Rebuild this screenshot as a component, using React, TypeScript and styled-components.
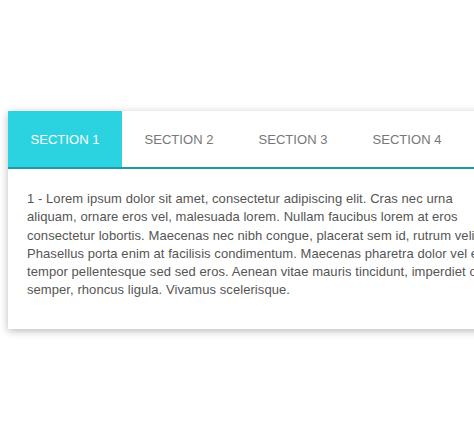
import React, { useState } from "react";
import styled, { createGlobalStyle } from "styled-components";

const GlobalStyle = createGlobalStyle`
  html, body {
    margin: 0;
    padding: 0;
    background: #fff;
    overflow: hidden;
  }
  body {
    font-family: "Liberation Sans", Arial, sans-serif;
  }
`;

const Page = styled.div`
  width: 474px;
  height: 447px;
  padding: 111px 0 0 8px;
  box-sizing: border-box;
`;

const Card = styled.div`
  width: 510px;
  background: #fff;
  box-shadow: 0 2px 8px rgba(0, 0, 0, 0.28);
`;

const TabBar = styled.div`
  display: flex;
  border-bottom: 2px solid #1c9aa6;
`;

const Tab = styled.button<{ $active: boolean }>`
  width: 114px;
  height: 56px;
  border: none;
  margin: 0;
  padding: 0;
  background: ${(p) => (p.$active ? "#2bd3e0" : "#fff")};
  color: ${(p) => (p.$active ? "#fff" : "#777")};
  font-family: "Liberation Sans", Arial, sans-serif;
  font-size: 13px;
  letter-spacing: 0.05px;
  text-transform: uppercase;
  cursor: pointer;
`;

const Content = styled.p`
  margin: 0;
  padding: 21px 19px 29px 19px;
  color: #555;
  font-size: 13px;
  letter-spacing: 0.07px;
  line-height: 18.3px;
`;

const sections = ["Section 1", "Section 2", "Section 3", "Section 4"];

const text =
  "Lorem ipsum dolor sit amet, consectetur adipiscing elit. Cras nec urna aliquam, ornare eros vel, malesuada lorem. Nullam faucibus lorem at eros consectetur lobortis. Maecenas nec nibh congue, placerat sem id, rutrum velit. Phasellus porta enim at facilisis condimentum. Maecenas pharetra dolor vel est tempor pellentesque sed sed eros. Aenean vitae mauris tincidunt, imperdiet orci semper, rhoncus ligula. Vivamus scelerisque.";

export default function App() {
  const [active, setActive] = useState(0);

  return (
    <Page>
      <GlobalStyle />
      <Card>
        <TabBar>
          {sections.map((s, i) => (
            <Tab key={s} $active={i === active} onClick={() => setActive(i)}>
              {s}
            </Tab>
          ))}
        </TabBar>
        <Content>{`${active + 1} - ${text}`}</Content>
      </Card>
    </Page>
  );
}
